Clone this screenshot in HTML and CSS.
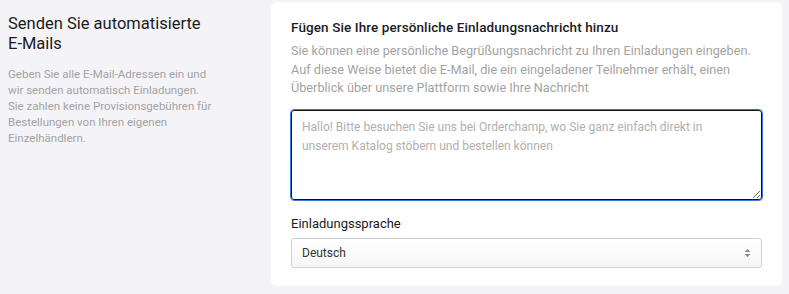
FILE: index.html
```html
<!DOCTYPE html>
<html lang="de">
<head>
  <meta charset="UTF-8" />
  <title>Einladungen</title>
  <link rel="stylesheet" href="styles.css">
</head>
<body>
  <div class="section">
    <div class="intro">
      <h2>Senden Sie automatisierte <span class="nowrap">E-Mails</span></h2>
      <p>Geben Sie alle E-Mail-Adressen ein und wir senden automatisch Einladungen.<br>Sie zahlen keine Provisionsgebühren für Bestellungen von Ihren eigenen Einzelhändlern.</p>
    </div>

    <div class="card">
      <h3>Fügen Sie Ihre persönliche Einladungsnachricht hinzu</h3>
      <p class="hint">Sie können eine persönliche Begrüßungsnachricht zu Ihren Einladungen eingeben. Auf diese Weise bietet die E-Mail, die ein eingeladener Teilnehmer erhält, einen Überblick über unsere Plattform sowie Ihre Nachricht</p>
      <textarea class="message" placeholder="Hallo! Bitte besuchen Sie uns bei Orderchamp, wo Sie ganz einfach direkt in unserem Katalog stöbern und bestellen können"></textarea>

      <label class="field-label">Einladungssprache</label>
      <div class="select">
        <span>Deutsch</span>
        <svg width="7" height="10" viewBox="0 0 7 10"><path d="M3.5 1 L6.5 4 H0.5 Z M3.5 9 L6.5 6 H0.5 Z" fill="#8a8a8a"/></svg>
      </div>
    </div>
  </div>
</body>
</html>
```

FILE: styles.css
```css
body {
  margin: 0;
  background: #f4f4f8;
  font-family: Roboto, "Noto Sans", sans-serif;
  color: #1b1b1b;
}

.section {
  display: flex;
  align-items: flex-start;
  padding-top: 2px;
}

.intro {
  width: 216px;
  padding: 0 47px 0 8px;
  box-sizing: content-box;
}

.intro h2 {
  margin: 12px 0 0;
  font-size: 16.5px;
  line-height: 19.5px;
  font-weight: 400;
}

.nowrap {
  white-space: nowrap;
}

.intro p {
  margin: 13px 0 0;
  font-size: 11.5px;
  line-height: 16px;
  color: #a3a3a3;
}

.card {
  width: 471px;
  background: #fff;
  border-radius: 6px;
  padding: 16px 20px 18px;
}

.card h3 {
  margin: 0;
  font-size: 13.5px;
  line-height: 18px;
  font-weight: 500;
  letter-spacing: 0.1px;
}

.hint {
  margin: 6px 0 0;
  font-size: 12.7px;
  line-height: 18.5px;
  color: #a3a3a3;
}

.message {
  display: block;
  box-sizing: border-box;
  width: 100%;
  height: 90px;
  margin-top: 12px;
  padding: 7px 10px;
  border: 1px solid #111;
  border-radius: 3px;
  outline: 1px solid #3a78e0;
  font-family: inherit;
  font-size: 12px;
  line-height: 19px;
  resize: vertical;
}

.message::placeholder {
  color: #b0b0b0;
}

.field-label {
  display: block;
  margin-top: 15px;
  font-size: 13px;
  line-height: 18px;
}

.select {
  display: flex;
  justify-content: space-between;
  align-items: center;
  height: 28px;
  margin-top: 5px;
  padding: 0 10px;
  border: 1px solid #cfcfcf;
  border-radius: 3px;
  background: linear-gradient(#fff, #f6f6f6);
  font-size: 12px;
  color: #333;
}
```
